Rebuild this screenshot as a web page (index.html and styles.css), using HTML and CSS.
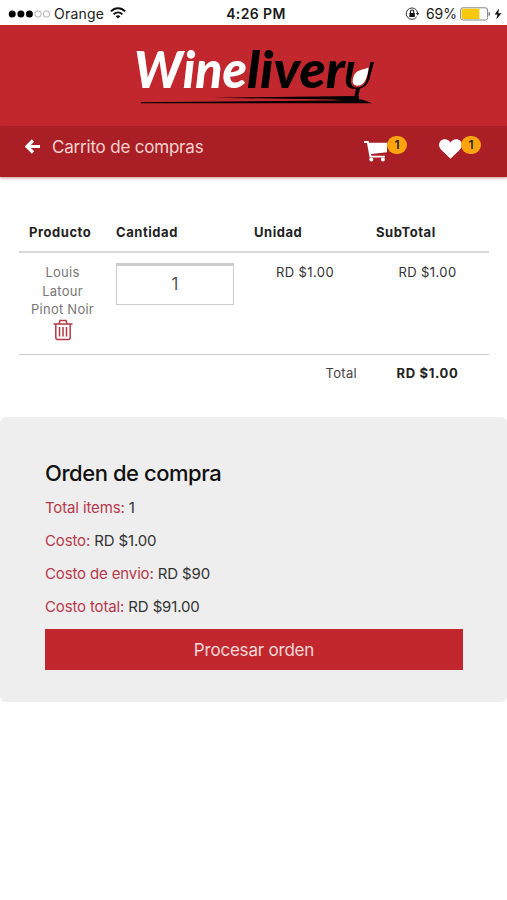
FILE: index.html
```html
<!DOCTYPE html>
<html lang="es">
<head>
<meta charset="utf-8">
<title>Winelivery</title>
<link rel="stylesheet" href="styles.css">
</head>
<body>
<div class="status">
  <div class="status-left">
    <svg class="signal" width="42" height="10" viewBox="0 0 42 10"><g fill="#000"><circle cx="4.200" cy="5" r="3.500"/><circle cx="12.900" cy="5" r="3.500"/><circle cx="21.400" cy="5" r="3.500"/></g><g fill="none" stroke="#999" stroke-width=".8"><circle cx="30" cy="5" r="3.200"/><circle cx="38.500" cy="5" r="3.200"/></g></svg>
    <span class="carrier">Orange</span>
    <svg class="wifi" width="16" height="12" viewBox="0 0 16 12"><g fill="none" stroke="#111" stroke-width="1.800"><path d="M.9 4.400C4.900.2 11.100.2 15.100 4.400"/><path d="M3.600 7.300c2.600-2.700 6.200-2.700 8.800 0"/></g><path d="M8 11.600 5.600 9.200c1.400-1.300 3.400-1.300 4.800 0z" fill="#111"/></svg>
  </div>
  <span class="clock">4:26 PM</span>
  <div class="status-right">
    <svg class="lock" width="15" height="14" viewBox="0 0 15 14"><path d="M11.700 9.800A5.700 5.700 0 1 1 12.600 6" fill="none" stroke="#333" stroke-width="1"/><path d="M10.800 6h3.600l-1.800 2.400z" fill="#333"/><rect x="4.400" y="6" width="5.400" height="4" fill="#111"/><path d="M5.500 6V4.600a1.600 1.600 0 0 1 3.200 0V6" fill="none" stroke="#111" stroke-width="1.100"/></svg>
    <span class="percent">69%</span>
    <svg class="battery" width="32" height="14" viewBox="0 0 32 14"><rect x=".6" y=".8" width="27" height="12.200" rx="2.200" fill="#fff" stroke="#777" stroke-width=".9"/><path d="M3 1.800h16.400V12H3a1.400 1.400 0 0 1-1.400-1.400V3.200A1.400 1.400 0 0 1 3 1.800z" fill="#f7c80d"/><path d="M28.700 4.700c1.600.5 1.600 3.900 0 4.400z" fill="#555"/></svg>
    <svg class="bolt" width="8" height="12" viewBox="0 0 8 12"><path d="M5 .5.6 6.600h2.800L2.300 11.500 7.400 5.200H4.300z" fill="#111"/></svg>
  </div>
</div>
<header class="brand">
  <svg class="logo" width="244" height="60" viewBox="0 0 244 60" role="img" aria-label="Winelivery">
    <text class="logo-text" x="0" y="42.500" textLength="113" lengthAdjust="spacingAndGlyphs" fill="#fff">Wine</text>
    <text class="logo-text" x="113" y="42.500" textLength="98" lengthAdjust="spacingAndGlyphs" fill="#000">liver</text>
    <path d="M214.500 17h6L217 34c-.8 6 2 8.500 6 8.500 6 0 9-4.500 10.200-10L236.500 17h3.500l-4.300 16c-1.700 6-5 9.500-9.700 10.500l-2.500 10.500 6 3H216l3.500-2.500L222 44c-8 .3-11.500-4-9.800-12z" fill="#000"/>
    <path d="M234.500 22.500c-5 2.500-12.200 2-14.700 8.500-1.800 5-1.800 9.200 3.400 9.700 7.500.3 10.500-8.700 11.300-18.200z" fill="#fff"/>
    <path d="M7 57.300 200 55.500l28-1 10 3.800H7z" fill="#000"/>
    <path d="M80 52.800 225 51V57L200 54.500z" fill="#000"/>
  </svg>
</header>
<nav class="bar">
  <svg class="back" width="15" height="15" viewBox="0 0 15 15"><path d="M8 1.500 2 7.500l6 6M2.500 7.500H15" fill="none" stroke="#fff" stroke-width="3.200"/></svg>
  <span class="title">Carrito de compras</span>
  <div class="action cart">
    <svg width="24" height="21" viewBox="0 0 24 21"><path d="M0 0h4.600l.7 1.700H23v9.600L7 13l.4 1.800H21v1.600H5.600L3 2H0z" fill="#fff"/><circle cx="7.300" cy="18.400" r="2" fill="#fff"/><circle cx="18.900" cy="18.400" r="2" fill="#fff"/></svg>
    <span class="badge">1</span>
  </div>
  <div class="action heart">
    <svg width="23" height="20" viewBox="0 0 23 20"><path d="M11.500 19.700 2.200 10.800C-2.300 5.800 1 .3 5.800.3c2.700 0 4.500 1.500 5.700 3.200C12.700 1.800 14.500.3 17.200.3c4.800 0 8.100 5.500 3.600 10.500z" fill="#fff"/></svg>
    <span class="badge">1</span>
  </div>
</nav>
<main>
  <section class="cart-table">
    <div class="row head"><span>Producto</span><span>Cantidad</span><span>Unidad</span><span>SubTotal</span></div>
    <div class="row item">
      <div class="product">Louis<br>Latour<br>Pinot Noir
        <svg class="trash" width="20" height="22" viewBox="0 0 20 22"><g fill="none" stroke="#b23a48" stroke-width="1.500"><path d="M.5 5h19M2.800 5v13.500a2 2 0 0 0 2 2h10.400a2 2 0 0 0 2-2V5M6 4.800l1-3.300h6l1 3.300"/><path d="M6.500 8v9.500M10 8v9.500M13.500 8v9.500"/></g></svg>
      </div>
      <div class="quantity">1</div>
      <span class="price">RD $1.00</span>
      <span class="price">RD $1.00</span>
    </div>
    <div class="row total"><span class="total-label">Total</span><span class="total-value">RD $1.00</span></div>
  </section>
  <section class="order">
    <h2>Orden de compra</h2>
    <p><span class="label">Total items:</span> 1</p>
    <p><span class="label">Costo:</span> RD $1.00</p>
    <p><span class="label">Costo de envio:</span> RD $90</p>
    <p><span class="label">Costo total:</span> RD $91.00</p>
    <button class="submit">Procesar orden</button>
  </section>
</main>
</body>
</html>
```
FILE: styles.css
```css
* { box-sizing: border-box; }
body {
  margin: 0;
  height: 900px;
  background: #fff;
  color: #222;
  font-family: Inter, "Liberation Sans", sans-serif;
  font-size: 13px;
  overflow: hidden;
}
svg { display: block; flex: none; }
.status {
  height: 25px;
  display: grid;
  grid-template-columns: 1fr auto 1fr;
  align-items: center;
  padding: 2px 5px 0 8px;
  font-size: 14px;
  line-height: 20px;
  color: #1a1a1a;
}
.status-left, .status-right { display: flex; align-items: center; }
.status-right { justify-content: flex-end; }
.carrier { margin-left: 4px; letter-spacing: .2px; }
.wifi { margin-left: 6px; margin-top: -2px; }
.clock { font-weight: 600; letter-spacing: .4px; padding-left: 2px; }
.percent { margin-left: 6px; }
.battery { margin-left: 3px; }
.bolt { margin-left: 2px; }
.brand {
  height: 101px;
  background: #c1272d;
  padding: 20px 0 0 134px;
}
.logo { overflow: visible; }
.logo-text { font: italic 900 52px Lato, sans-serif; }
.bar {
  height: 51px;
  background: #a91f25;
  display: flex;
  align-items: flex-start;
  padding-left: 25px;
  box-shadow: 0 1px 3px rgba(169, 31, 37, .5);
}
.back { margin-top: 13px; }
.title {
  margin: 10px 0 0 12px;
  width: 300px;
  font-size: 17px;
  letter-spacing: -.2px;
  line-height: 22px;
  color: #f8d3d1;
}
.action { display: flex; align-items: flex-start; }
.action svg { margin-top: 15px; }
.cart { margin-left: 12px; }
.heart { margin-left: 32px; }
.heart svg { margin-top: 13px; }
.badge {
  margin: 10px 0 0 -1px;
  width: 20px;
  height: 18px;
  border-radius: 9px;
  background: #ffa30f;
  color: #222;
  font-size: 12px;
  font-weight: 600;
  line-height: 18px;
  text-align: center;
}
.cart-table { margin: 33px 18px 0 19px; }
.row { display: grid; grid-template-columns: 87px 138px 122px 123px; }
.head {
  height: 43px;
  padding-top: 13px;
  border-bottom: 2px solid #d9d9d9;
  font-weight: 700;
  letter-spacing: .55px;
  line-height: 18px;
}
.head span { padding-left: 10px; }
.item { height: 101px; padding-top: 10px; text-align: center; line-height: 18.500px; letter-spacing: .25px; }
.product { color: #777; }
.trash { margin: 0 auto; }
.quantity {
  height: 42px;
  margin: 0 10px;
  border: 1px solid #ccc;
  border-top: 3px solid #ccc;
  font-size: 17px;
  line-height: 37px;
  color: #555;
}
.item > .price { color: #333; letter-spacing: .4px; }
.total { height: 63px; border-top: 1px solid #ccc; padding-top: 9px; line-height: 18px; }
.total-label { grid-column: 3; text-align: right; padding-right: 9px; color: #444; letter-spacing: .3px; }
.total-value { text-align: center; font-weight: 700; letter-spacing: .65px; }
.order {
  height: 285px;
  padding: 41px 44px 0 45px;
  background: #eee;
  border-radius: 6px;
}
.order h2 { margin: 0 0 9px; font-size: 22px; font-weight: 500; letter-spacing: -.45px; line-height: 30px; color: #111; }
.order p { margin: 0 0 11px; font-size: 15px; letter-spacing: -.14px; line-height: 22px; color: #333; }
.order .label { color: #b8384c; }
.submit {
  display: block;
  width: 100%;
  height: 41px;
  border: 0;
  padding: 0;
  background: #c1272d;
  color: #f8d9d9;
  font: 17px Inter, sans-serif;
  letter-spacing: -.2px;
}
```
